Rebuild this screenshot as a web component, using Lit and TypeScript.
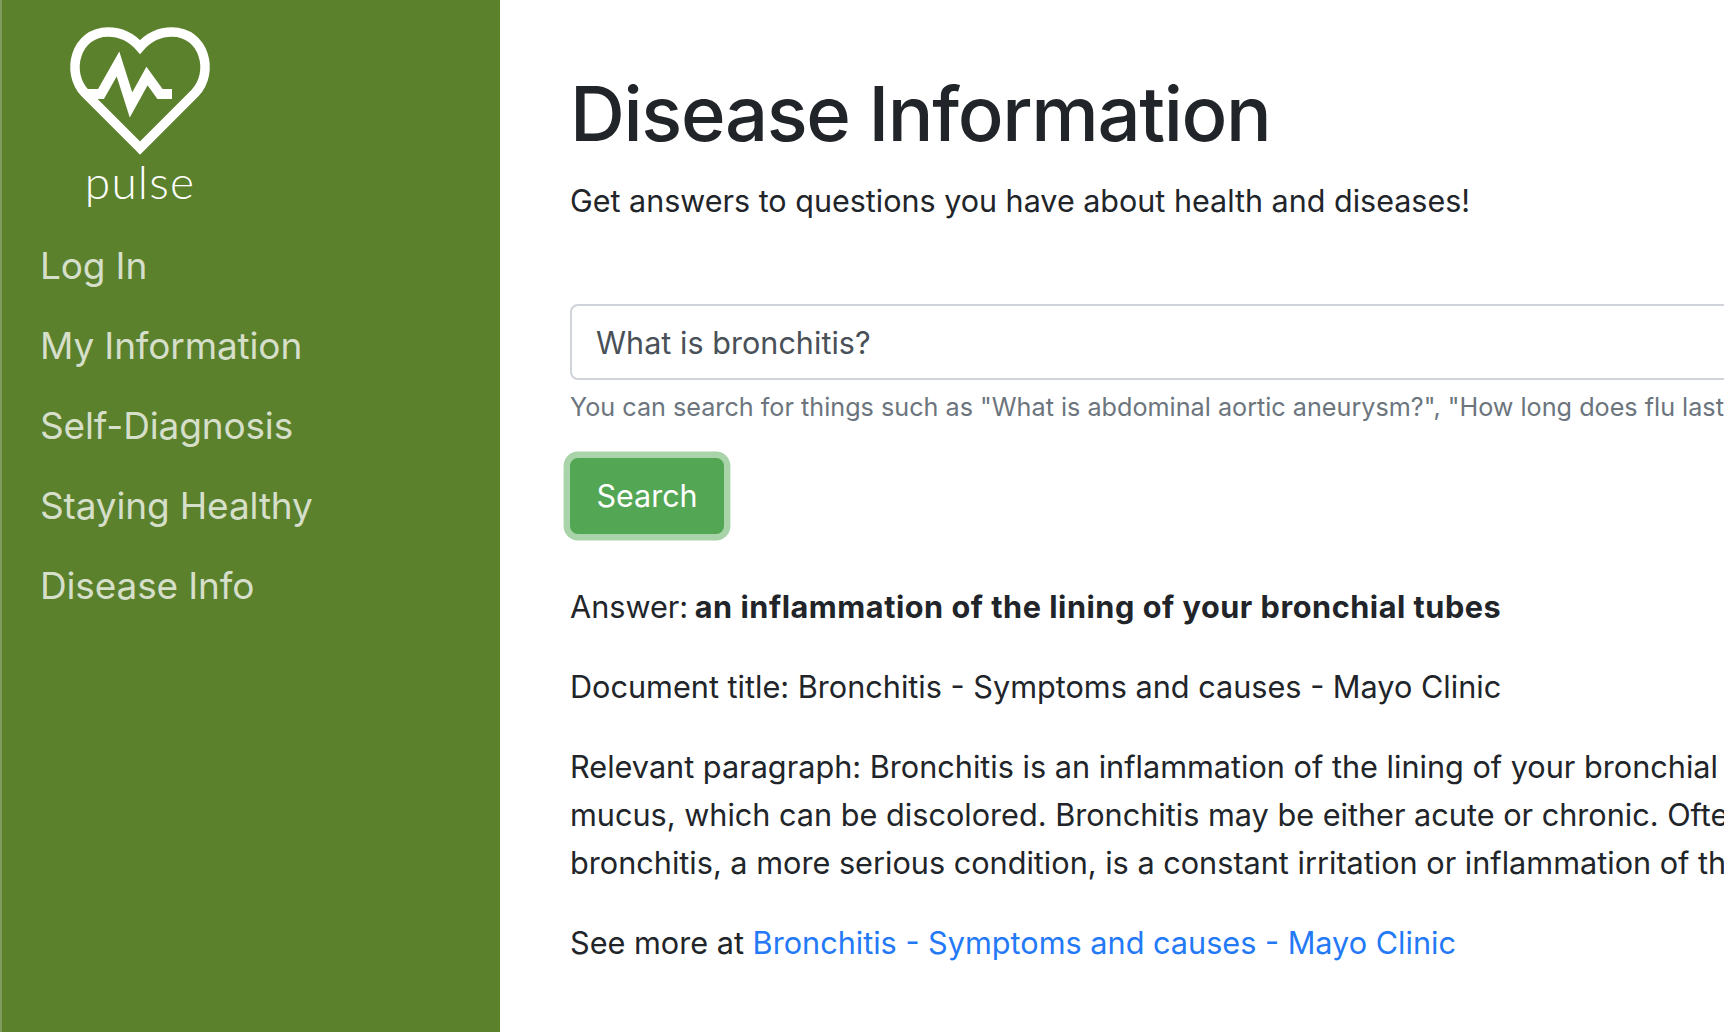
import { LitElement, html, css } from 'lit';
import { customElement } from 'lit/decorators.js';

const NAV_ITEMS = ['Log In', 'My Information', 'Self-Diagnosis', 'Staying Healthy', 'Disease Info'];

@customElement('app-root')
export class AppRoot extends LitElement {
  static styles = css`
    :host {
      display: flex;
      height: 1032px;
      overflow: hidden;
      background: #fff;
      color: #212529;
      font-family: Inter, "Liberation Sans", sans-serif;
    }

    .sidebar {
      flex: 0 0 500px;
      box-sizing: border-box;
      background: #5b812d;
      border-left: 2px solid #7f9c5e;
      padding-left: 38px;
    }

    .logo {
      width: 200px;
      display: flex;
      flex-direction: column;
      align-items: center;
    }

    .logo svg {
      display: block;
      margin-top: 20px;
      width: 145px;
      height: 140px;
    }

    .logo-name {
      margin-top: -2px;
      font-family: Lato, sans-serif;
      font-weight: 300;
      font-size: 46px;
      line-height: 48px;
      letter-spacing: 1.2px;
      color: #fff;
    }

    nav {
      display: flex;
      flex-direction: column;
      margin-top: 20px;
    }

    nav a {
      font-size: 37px;
      line-height: 80px;
      letter-spacing: -0.15px;
      color: rgba(255, 255, 255, 0.75);
      text-decoration: none;
    }

    main {
      flex: 0 0 1600px;
      box-sizing: border-box;
      padding: 65px 0 0 70px;
      font-size: 30.5px;
      line-height: 48px;
    }

    h1 {
      margin: 0;
      font-size: 76px;
      font-weight: 540;
      line-height: 96px;
      letter-spacing: -1.35px;
    }

    .lead {
      margin: 16px 0 0;
    }

    form {
      margin-top: 79px;
    }

    input {
      display: block;
      box-sizing: border-box;
      width: 100%;
      height: 76px;
      padding: 0 24px;
      border: 2px solid #ced4da;
      border-radius: 8px;
      outline: none;
      font: inherit;
      letter-spacing: 0.05px;
      color: #495057;
    }

    .hint {
      display: block;
      margin-top: 8px;
      font-size: 25.2px;
      line-height: 38px;
      color: #6c757d;
      white-space: nowrap;
    }

    button {
      display: block;
      margin-top: 32px;
      width: 154px;
      height: 76px;
      padding: 0;
      border: 2px solid #53a653;
      border-radius: 8px;
      background: #53a653;
      box-shadow: 0 0 0 6.4px #a9d3a9;
      font: inherit;
      color: #fff;
    }

    .result {
      margin: 32px 0 0;
      font-size: 30.65px;
      white-space: nowrap;
    }

    .answer {
      margin-top: 49px;
    }

    .answer b {
      margin-left: -2px;
      letter-spacing: 0.53px;
    }

    a.source {
      color: #2479f7;
      text-decoration: none;
    }
  `;

  render() {
    return html`
      <aside class="sidebar">
        <div class="logo">
          <svg viewBox="68 20 145 140" fill="none" stroke="#fff" stroke-width="9.5" stroke-miterlimit="10">
            <path d="M140 148 L85 93 C65 72 76 32 108 32 C122 32 133 39 140 47 C147 39 158 32 172 32 C204 32 215 72 195 93 Z" />
            <path d="M88 94 H101 L118 64 L131 105 L147 76 L160 94 H172" stroke-width="10" />
          </svg>
          <span class="logo-name">pulse</span>
        </div>
        <nav>
          ${NAV_ITEMS.map(item => html`<a href="#">${item}</a>`)}
        </nav>
      </aside>
      <main>
        <h1>Disease Information</h1>
        <p class="lead">Get answers to questions you have about health and diseases!</p>
        <form>
          <input type="text" value="What is bronchitis?" />
          <small class="hint">You can search for things such as "What is abdominal aortic aneurysm?", "How long does flu last?"</small>
          <button type="button">Search</button>
        </form>
        <p class="result answer">Answer: <b>an inflammation of the lining of your bronchial tubes</b></p>
        <p class="result">Document title: Bronchitis - Symptoms and causes - Mayo Clinic</p>
        <p class="result">
          Relevant paragraph: Bronchitis is an inflammation of the lining of your bronchial tubes, which carry air<br />
          mucus, which can be discolored. Bronchitis may be either acute or chronic. Often developing from a cold<br />
          bronchitis, a more serious condition, is a constant irritation or inflammation of the lining of the tubes
        </p>
        <p class="result">See more at <a class="source" href="#">Bronchitis - Symptoms and causes - Mayo Clinic</a></p>
      </main>
    `;
  }
}
